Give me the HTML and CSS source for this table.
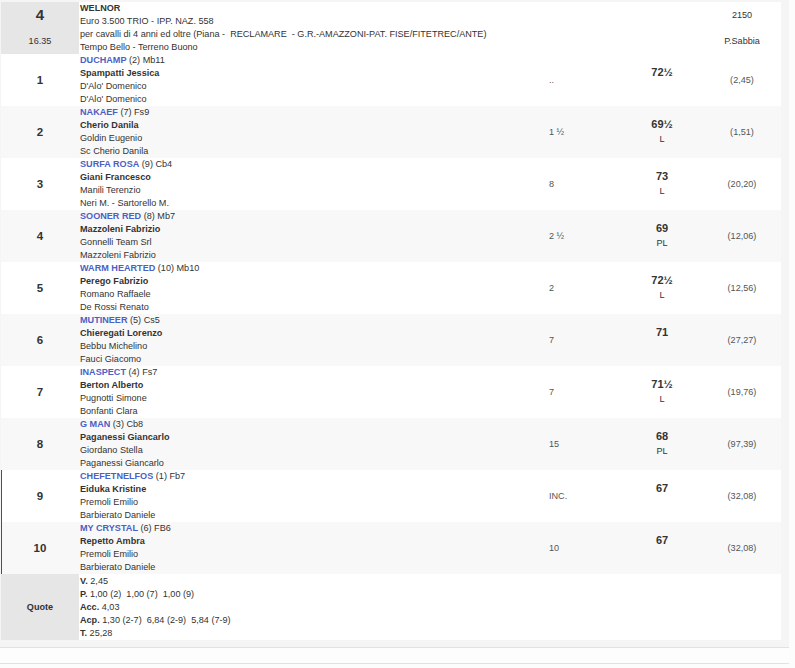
FILE: index.html
```html
<!DOCTYPE html>
<html>
<head>
<meta charset="utf-8">
<link rel="stylesheet" href="styles.css">
</head>
<body>
<div class="wrap">
<table class="race">
  <colgroup>
    <col class="c-num"><col class="c-main"><col class="c-dist"><col class="c-wt"><col class="c-odds">
  </colgroup>
  <tr class="head">
    <td class="num gray"><div class="big">4</div><div class="time">16.35</div></td>
    <td class="main">
      <div class="b">WELNOR</div>
      <div>Euro 3.500 TRIO - IPP. NAZ. 558</div>
      <div>per cavalli di 4 anni ed oltre (Piana -&nbsp; RECLAMARE&nbsp; - G.R.-AMAZZONI-PAT. FISE/FITETREC/ANTE)</div>
      <div>Tempo Bello - Terreno Buono</div>
    </td>
    <td></td>
    <td></td>
    <td class="odds top"><div class="hl">2150</div><div class="hl">P.Sabbia</div></td>
  </tr>
  <tr>
    <td class="num">1</td>
    <td class="main"><div><span class="horse">DUCHAMP</span> (2) Mb11</div><div class="b">Spampatti Jessica</div><div>D'Alo' Domenico</div><div>D'Alo' Domenico</div></td>
    <td class="dist">..</td>
    <td class="wt"><div class="w">72½</div><div class="wl">&nbsp;</div></td>
    <td class="odds">(2,45)</td>
  </tr>
  <tr class="alt">
    <td class="num">2</td>
    <td class="main"><div><span class="horse">NAKAEF</span> (7) Fs9</div><div class="b">Cherio Danila</div><div>Goldin Eugenio</div><div>Sc Cherio Danila</div></td>
    <td class="dist">1 ½</td>
    <td class="wt"><div class="w">69½</div><div class="wl">L</div></td>
    <td class="odds">(1,51)</td>
  </tr>
  <tr>
    <td class="num">3</td>
    <td class="main"><div><span class="horse">SURFA ROSA</span> (9) Cb4</div><div class="b">Giani Francesco</div><div>Manili Terenzio</div><div>Neri M. - Sartorello M.</div></td>
    <td class="dist">8</td>
    <td class="wt"><div class="w">73</div><div class="wl">L</div></td>
    <td class="odds">(20,20)</td>
  </tr>
  <tr class="alt">
    <td class="num">4</td>
    <td class="main"><div><span class="horse">SOONER RED</span> (8) Mb7</div><div class="b">Mazzoleni Fabrizio</div><div>Gonnelli Team Srl</div><div>Mazzoleni Fabrizio</div></td>
    <td class="dist">2 ½</td>
    <td class="wt"><div class="w">69</div><div class="wl">PL</div></td>
    <td class="odds">(12,06)</td>
  </tr>
  <tr>
    <td class="num">5</td>
    <td class="main"><div><span class="horse">WARM HEARTED</span> (10) Mb10</div><div class="b">Perego Fabrizio</div><div>Romano Raffaele</div><div>De Rossi Renato</div></td>
    <td class="dist">2</td>
    <td class="wt"><div class="w">72½</div><div class="wl">L</div></td>
    <td class="odds">(12,56)</td>
  </tr>
  <tr class="alt">
    <td class="num">6</td>
    <td class="main"><div><span class="horse">MUTINEER</span> (5) Cs5</div><div class="b">Chieregati Lorenzo</div><div>Bebbu Michelino</div><div>Fauci Giacomo</div></td>
    <td class="dist">7</td>
    <td class="wt"><div class="w">71</div><div class="wl">&nbsp;</div></td>
    <td class="odds">(27,27)</td>
  </tr>
  <tr>
    <td class="num">7</td>
    <td class="main"><div><span class="horse">INASPECT</span> (4) Fs7</div><div class="b">Berton Alberto</div><div>Pugnotti Simone</div><div>Bonfanti Clara</div></td>
    <td class="dist">7</td>
    <td class="wt"><div class="w">71½</div><div class="wl">L</div></td>
    <td class="odds">(19,76)</td>
  </tr>
  <tr class="alt">
    <td class="num">8</td>
    <td class="main"><div><span class="horse">G MAN</span> (3) Cb8</div><div class="b">Paganessi Giancarlo</div><div>Giordano Stella</div><div>Paganessi Giancarlo</div></td>
    <td class="dist">15</td>
    <td class="wt"><div class="w">68</div><div class="wl">PL</div></td>
    <td class="odds">(97,39)</td>
  </tr>
  <tr class="flag">
    <td class="num">9</td>
    <td class="main"><div><span class="horse">CHEFETNELFOS</span> (1) Fb7</div><div class="b">Eiduka Kristine</div><div>Premoli Emilio</div><div>Barbierato Daniele</div></td>
    <td class="dist">INC.</td>
    <td class="wt"><div class="w">67</div><div class="wl">&nbsp;</div></td>
    <td class="odds">(32,08)</td>
  </tr>
  <tr class="alt flag">
    <td class="num">10</td>
    <td class="main"><div><span class="horse">MY CRYSTAL</span> (6) FB6</div><div class="b">Repetto Ambra</div><div>Premoli Emilio</div><div>Barbierato Daniele</div></td>
    <td class="dist">10</td>
    <td class="wt"><div class="w">67</div><div class="wl">&nbsp;</div></td>
    <td class="odds">(32,08)</td>
  </tr>
  <tr class="quote">
    <td class="num gray qlabel">Quote</td>
    <td class="main">
      <div><span class="b">V.</span> 2,45</div>
      <div><span class="b">P.</span> 1,00 (2)&nbsp; 1,00 (7)&nbsp; 1,00 (9)</div>
      <div><span class="b">Acc.</span> 4,03</div>
      <div><span class="b">Acp.</span> 1,30 (2-7)&nbsp; 6,84 (2-9)&nbsp; 5,84 (7-9)</div>
      <div><span class="b">T.</span> 25,28</div>
    </td>
    <td></td>
    <td></td>
    <td></td>
  </tr>
</table>
</div>
<div class="foot"></div>
</body>
</html>
```
FILE: styles.css
```css
html, body {
  margin: 0;
  padding: 0;
  background: #fcfcfc;
  font-family: "Liberation Sans", Arial, sans-serif;
  color: #333;
}
.wrap {
  width: 781px;
  padding: 2px 7px 7px 1px;
  background: #f5f5f5;
}
.race {
  width: 780px;
  border-collapse: collapse;
  table-layout: fixed;
  font-size: 9.1px;
  line-height: 13px;
}
.c-num { width: 78px; }
.c-main { width: 462px; }
.c-dist { width: 80px; }
.c-wt { width: 82px; }
.c-odds { width: 78px; }
.race td {
  padding: 0;
  vertical-align: middle;
}
.race tr { background: #fff; }
.race tr.alt { background: #f8f8f8; }
.race tr > td { height: 52px; }
.race tr.quote > td { height: 66px; }
.gray { background: #e6e6e6; }
.num {
  text-align: center;
  font-weight: bold;
  font-size: 11.5px;
  color: #333;
}
.big {
  font-size: 15px;
  line-height: 26px;
}
.time {
  font-size: 9.1px;
  font-weight: normal;
  line-height: 26px;
}
.main { padding-left: 1px !important; }
.b { font-weight: bold; }
.horse {
  color: #4b5fc4;
  font-weight: bold;
}
.dist {
  padding-left: 8px !important;
  color: #555;
}
.wt { text-align: center; }
.w {
  font-size: 11px;
  font-weight: bold;
  line-height: 15px;
}
.wl {
  line-height: 15px;
}
.odds {
  text-align: center;
  color: #555;
}
.odds.top { vertical-align: top; color: #333; }
.hl { line-height: 26px; }
.flag > td.num {
  background-image: linear-gradient(#d01a1a, #d01a1a);
  background-size: 1px 100%;
  background-repeat: no-repeat;
  background-position: left top;
}
.qlabel { font-size: 9.1px; }
.foot {
  width: 789px;
  height: 15px;
  border-top: 1px solid #e2e2e2;
  border-bottom: 1px solid #e2e2e2;
  background: #fdfdfd;
}
```
